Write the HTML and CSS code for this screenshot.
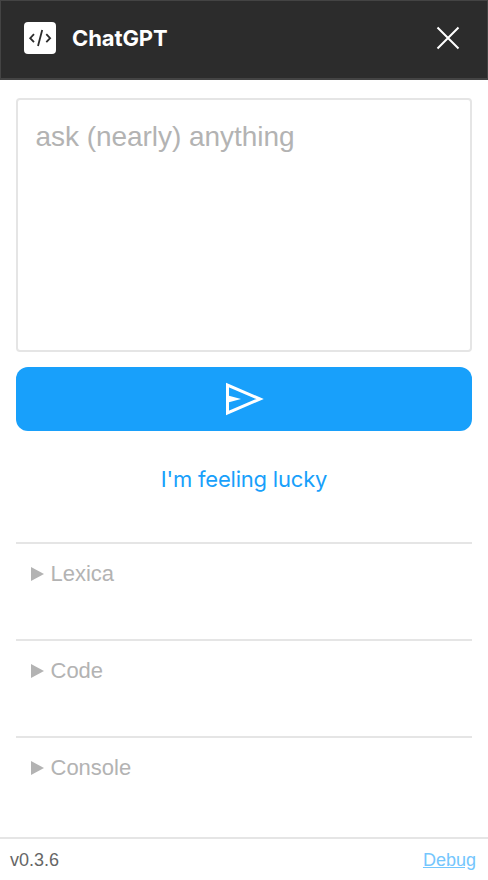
FILE: index.html
```html
<!DOCTYPE html>
<html lang="en">
<head>
<meta charset="utf-8">
<title>ChatGPT</title>
<link rel="stylesheet" href="styles.css">
</head>
<body>
<header class="titlebar">
  <svg class="logo" width="32" height="32" viewBox="0 0 32 32" fill="none" stroke="#2c2c2c" stroke-width="1.800">
    <rect width="32" height="32" rx="4" fill="#fff" stroke="none"/>
    <path d="M10 12.200 6.200 16.200l3.800 4M22.300 12.200l3.800 4-3.800 4M18.200 8l-4.200 16"/>
  </svg>
  <h1 class="title">ChatGPT</h1>
  <svg class="close" width="24" height="24" viewBox="0 0 24 24" fill="none" stroke="#fff" stroke-width="2">
    <path d="M1.500 1.500l21 21M22.500 1.500l-21 21"/>
  </svg>
</header>
<main class="content">
  <textarea class="prompt" placeholder="ask (nearly) anything"></textarea>
  <button class="send" aria-label="Send">
    <svg width="40" height="34" viewBox="0 0 40 34">
      <path d="M3.500 3v28L36 17z" fill="none" stroke="#fff" stroke-width="3"/>
      <path d="M4 13.500 17 17 4 20.500z" fill="#fff"/>
    </svg>
  </button>
  <button class="lucky">I'm feeling lucky</button>
  <section class="panel"><svg class="arrow" width="13" height="14" viewBox="0 0 13 14"><path d="M0 0l13 7-13 7z"/></svg><span>Lexica</span></section>
  <section class="panel"><svg class="arrow" width="13" height="14" viewBox="0 0 13 14"><path d="M0 0l13 7-13 7z"/></svg><span>Code</span></section>
  <section class="panel"><svg class="arrow" width="13" height="14" viewBox="0 0 13 14"><path d="M0 0l13 7-13 7z"/></svg><span>Console</span></section>
</main>
<footer class="footer"><span>v0.3.6</span><a class="debug" href="#">Debug</a></footer>
</body>
</html>
```
FILE: styles.css
```css
* { box-sizing: border-box; }
body {
  margin: 0;
  height: 880px;
  display: flex;
  flex-direction: column;
  background: #fff;
  font-family: "Liberation Sans", Arial, sans-serif;
  overflow: hidden;
}
.titlebar {
  height: 80px;
  flex: none;
  display: flex;
  align-items: center;
  padding: 0 27px 3px 23px;
  background: #2c2c2c;
  border: 1px solid #444;
  border-bottom-width: 2px;
}
.title {
  margin: 0 auto 0 16px;
  color: #fff;
  font: 700 22px/32px Inter, sans-serif;
  letter-spacing: -0.1px;
}
.content {
  flex: 1;
  display: flex;
  flex-direction: column;
  padding: 18px 16px 0;
}
.prompt {
  height: 254px;
  margin: 0;
  padding: 21px 18px 20px 17.5px;
  border: 2px solid #e5e5e5;
  border-radius: 4px;
  background: #fff;
  font: 28px/32px "Liberation Sans", Arial, sans-serif;
  letter-spacing: -0.04px;
  resize: none;
}
.prompt::placeholder { color: #b3b3b3; opacity: 1; }
.send {
  height: 64px;
  margin: 15px 0 0;
  padding: 0;
  display: flex;
  align-items: center;
  justify-content: center;
  border: 0;
  border-radius: 12px;
  background: #18a0fb;
}
.lucky {
  height: 64px;
  margin: 16px 0 31px;
  padding: 0;
  border: 0;
  background: none;
  color: #18a0fb;
  font: 22px/32px Inter, sans-serif;
  letter-spacing: -0.2px;
}
.panel {
  height: 97px;
  display: flex;
  align-items: flex-start;
  padding: 16px 15px 0;
  border-top: 2px solid #e5e5e5;
  color: #b3b3b3;
  font-size: 22px;
  line-height: 28px;
}
.arrow {
  margin: 7px 6.5px 0 0;
  fill: #b3b3b3;
}
.footer {
  height: 43px;
  flex: none;
  display: flex;
  justify-content: space-between;
  padding: 9px 12px 0 10px;
  border-top: 2px solid #e5e5e5;
  color: #666;
  font-size: 18px;
  line-height: 24px;
}
.debug { color: #74c6fd; }
```
